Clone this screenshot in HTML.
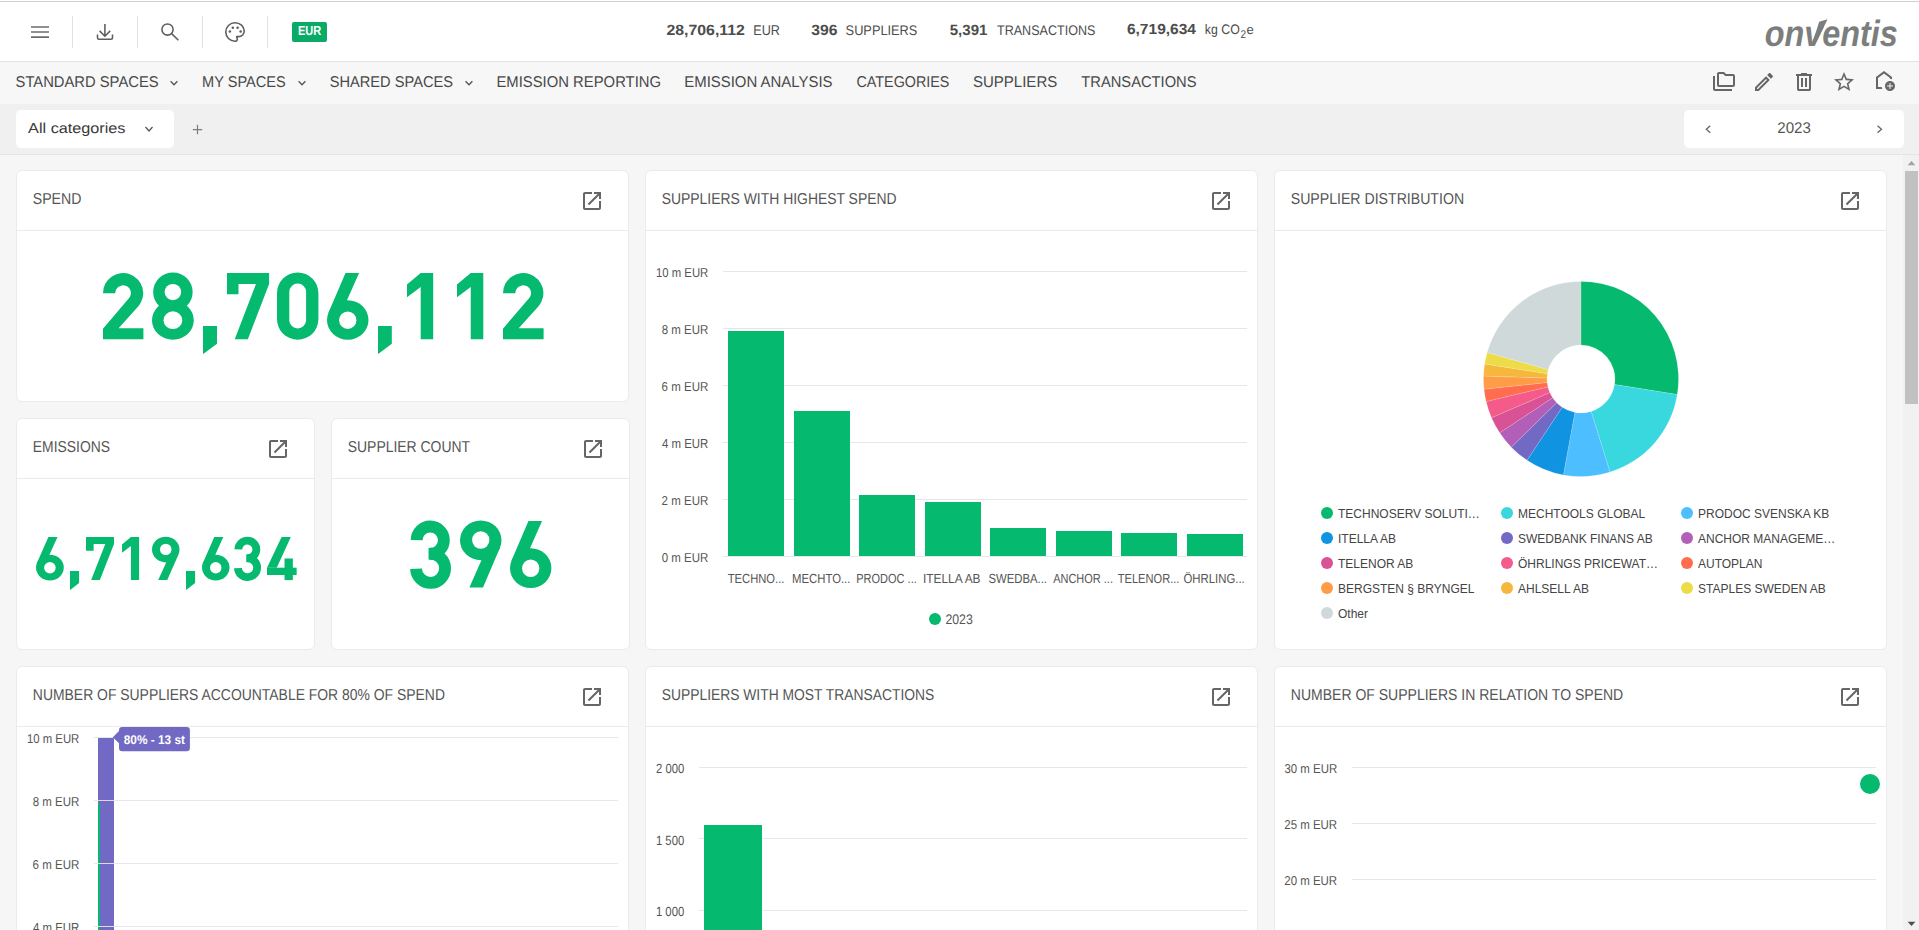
<!DOCTYPE html>
<html><head><meta charset="utf-8"><title>Spend dashboard</title>
<style>
html,body{margin:0;padding:0}
body{width:1919px;height:930px;overflow:hidden;position:relative;background:#f6f6f6;font-family:"Liberation Sans",sans-serif}
.t{position:absolute;white-space:nowrap;line-height:1;transform-origin:0 0;display:block;text-rendering:geometricPrecision}
</style></head><body>
<div style="position:absolute;left:0px;top:0px;width:1919px;height:61px;background:#fff;"></div>
<div style="position:absolute;left:0px;top:1px;width:1919px;height:1px;background:#cfd1d0;"></div>
<div style="position:absolute;left:0px;top:61px;width:1919px;height:1px;background:#e3e3e3;"></div>
<div style="position:absolute;left:72px;top:16px;width:1px;height:32px;background:#e2e2e2;"></div>
<div style="position:absolute;left:137px;top:16px;width:1px;height:32px;background:#e2e2e2;"></div>
<div style="position:absolute;left:202px;top:16px;width:1px;height:32px;background:#e2e2e2;"></div>
<div style="position:absolute;left:267px;top:16px;width:1px;height:32px;background:#e2e2e2;"></div>
<svg style="position:absolute;left:28px;top:20px" width="24" height="24" viewBox="28 20 24 24" fill="none" stroke="#5e5e5e" stroke-width="1.550" stroke-linecap="butt" stroke-linejoin="round"><path d="M31 27H49M31 32H49M31 37.100H49" stroke="#6c6c6c"/></svg>
<svg style="position:absolute;left:93px;top:20px" width="24" height="24" viewBox="93 20 24 24" fill="none" stroke="#5e5e5e" stroke-width="1.550" stroke-linecap="butt" stroke-linejoin="round"><path d="M104.900 23.900V35.600M99.600 30.900L104.900 36.200L110.200 30.900"/><path d="M97.500 34.500V37.800Q97.500 39.300 99 39.300H111Q112.500 39.300 112.500 37.800V34.500"/></svg>
<svg style="position:absolute;left:158px;top:20px" width="24" height="24" viewBox="158 20 24 24" fill="none" stroke="#5e5e5e" stroke-width="1.550" stroke-linecap="butt" stroke-linejoin="round"><circle cx="167.500" cy="29.500" r="5.600"/><path d="M171.600 33.600L178.400 40.200"/></svg>
<svg style="position:absolute;left:223px;top:20px" width="24" height="24" viewBox="223 20 24 24" fill="none" stroke="#5e5e5e" stroke-width="1.550" stroke-linecap="butt" stroke-linejoin="round"><g transform="translate(235 32) scale(0.925) translate(-12 -12)"><path d="M12 22C6.490 22 2 17.510 2 12S6.490 2 12 2s10 4.040 10 9c0 3.310-2.690 6-6 6h-1.770c-.28 0-.5.220-.5.500 0 .120.050.230.130.330.410.470.640 1.060.640 1.670A2.500 2.500 0 0 1 12 22z" stroke-width="1.680"/></g><circle cx="229.9" cy="31.6" r="1.250" fill="#5e5e5e" stroke="none"/><circle cx="232.8" cy="27.7" r="1.250" fill="#5e5e5e" stroke="none"/><circle cx="237.6" cy="27.7" r="1.250" fill="#5e5e5e" stroke="none"/><circle cx="240.6" cy="31.6" r="1.250" fill="#5e5e5e" stroke="none"/></svg>
<div style="position:absolute;left:292px;top:22px;width:35px;height:20px;background:#0aab66;border-radius:2px;"></div>
<span class="t" style="left:297px;top:24.22px;font-size:13.09px;color:#fff;transform:translateX(0.90px) scaleX(0.8442);font-weight:bold;">EUR</span>
<span class="t" style="left:666px;top:23.50px;font-size:14.77px;color:#4d4d4d;transform:translateX(0.45px) scaleX(1.0732);font-weight:bold;">28,706,112</span>
<span class="t" style="left:753px;top:23.06px;font-size:14.11px;color:#4d4d4d;transform:translateX(0.26px) scaleX(0.8939);">EUR</span>
<span class="t" style="left:811px;top:23.50px;font-size:14.77px;color:#4d4d4d;transform:translateX(0.20px) scaleX(1.0622);font-weight:bold;">396</span>
<span class="t" style="left:845px;top:24.23px;font-size:13.91px;color:#4d4d4d;transform:translateX(0.62px) scaleX(0.9189);">SUPPLIERS</span>
<span class="t" style="left:949px;top:23.50px;font-size:14.77px;color:#4d4d4d;transform:translateX(0.75px) scaleX(1.0193);font-weight:bold;">5,391</span>
<span class="t" style="left:997px;top:24.23px;font-size:13.91px;color:#4d4d4d;transform:translateX(0.02px) scaleX(0.9026);">TRANSACTIONS</span>
<span class="t" style="left:1126px;top:22.52px;font-size:14.62px;color:#4d4d4d;transform:translateX(0.92px) scaleX(1.0626);font-weight:bold;">6,719,634</span>
<span class="t" style="left:1204px;top:23.22px;font-size:13.86px;color:#4d4d4d;transform:translateX(0.87px) scaleX(0.8893);">kg CO</span>
<span class="t" style="left:1240px;top:30.43px;font-size:11.18px;color:#4d4d4d;transform:translateX(0.50px) scaleX(0.8948);">2</span>
<span class="t" style="left:1246px;top:22.82px;font-size:13.21px;color:#4d4d4d;transform:translateX(0.59px) scaleX(0.9912);">e</span>
<span class="t" style="left:1764px;top:15.83px;font-size:36.70px;color:#7c7e7d;transform:translateX(0.73px) scaleX(0.8826);font-weight:bold;font-style:italic;">onventis</span>
<svg style="position:absolute;left:1790px;top:10px" width="60" height="40" viewBox="0 0 60 40"><polygon points="24.800,35.700 37.500,9.250 29.200,11.750 21.500,35.700" fill="#7c7e7d"/></svg>
<div style="position:absolute;left:0px;top:62px;width:1919px;height:42px;background:#f7f7f7;"></div>
<span class="t" style="left:15px;top:74.87px;font-size:15.63px;color:#484848;transform:translateX(0.54px) scaleX(0.9451);">STANDARD SPACES</span>
<span class="t" style="left:202px;top:74.87px;font-size:15.63px;color:#484848;transform:translateX(0.10px) scaleX(0.9311);">MY SPACES</span>
<span class="t" style="left:329px;top:74.87px;font-size:15.63px;color:#484848;transform:translateX(0.69px) scaleX(0.9361);">SHARED SPACES</span>
<span class="t" style="left:496px;top:74.87px;font-size:15.63px;color:#484848;transform:translateX(0.43px) scaleX(0.9496);">EMISSION REPORTING</span>
<span class="t" style="left:684px;top:74.87px;font-size:15.63px;color:#484848;transform:translateX(0.27px) scaleX(0.9554);">EMISSION ANALYSIS</span>
<span class="t" style="left:856px;top:74.87px;font-size:15.63px;color:#484848;transform:translateX(0.48px) scaleX(0.9177);">CATEGORIES</span>
<span class="t" style="left:972px;top:74.87px;font-size:15.63px;color:#484848;transform:translateX(0.97px) scaleX(0.9607);">SUPPLIERS</span>
<span class="t" style="left:1081px;top:74.87px;font-size:15.63px;color:#484848;transform:translateX(0.37px) scaleX(0.9404);">TRANSACTIONS</span>
<svg style="position:absolute;left:166.4px;top:74.6px" width="16" height="16" viewBox="-8 -8 16 16"><polyline points="-3.4,-1.75 0,1.75 3.4,-1.75" fill="none" stroke="#555" stroke-width="1.3"/></svg>
<svg style="position:absolute;left:293.9px;top:74.6px" width="16" height="16" viewBox="-8 -8 16 16"><polyline points="-3.4,-1.75 0,1.75 3.4,-1.75" fill="none" stroke="#555" stroke-width="1.3"/></svg>
<svg style="position:absolute;left:461.2px;top:74.6px" width="16" height="16" viewBox="-8 -8 16 16"><polyline points="-3.4,-1.75 0,1.75 3.4,-1.75" fill="none" stroke="#555" stroke-width="1.3"/></svg>
<svg style="position:absolute;left:1712px;top:70px" width="24" height="24" viewBox="0 0 24 24"><path fill="#666" d="M3 19h17v2H3c-1.1 0-2-.9-2-2V6h2v13zM23 6v9c0 1.1-.9 2-2 2H7c-1.1 0-2-.9-2-2l.01-11c0-1.1.89-2 1.99-2h5l2 2h7c1.1 0 2 .9 2 2zM7 15h14V6h-7.830l-2-2H7v11z"/></svg>
<svg style="position:absolute;left:1752px;top:70px" width="24" height="24" viewBox="0 0 24 24"><path fill="#666" d="M14.06 9.02l.92.92L5.92 19H5v-.92l9.06-9.06M17.66 3c-.25 0-.51.1-.7.29l-1.83 1.83 3.75 3.75 1.83-1.83c.39-.39.39-1.02 0-1.41l-2.34-2.34c-.2-.2-.45-.29-.71-.29zm-3.6 3.19L3 17.250V21h3.750L17.810 9.940l-3.750-3.750z"/></svg>
<svg style="position:absolute;left:1792px;top:70px" width="24" height="24" viewBox="0 0 24 24"><path fill="#666" d="M7 21q-.825 0-1.412-.587T5 19V6H4V4h5V3h6v1h5v2h-1v13q0 .825-.587 1.413T17 21zM17 6H7v13h10zM9 17h2V8H9zm4 0h2V8h-2zM7 6v13z"/></svg>
<svg style="position:absolute;left:1832px;top:70px" width="24" height="24" viewBox="0 0 24 24"><path fill="#666" d="M22 9.240l-7.190-.620L12 2 9.190 8.630 2 9.240l5.460 4.730L5.820 21 12 17.270 18.180 21l-1.630-7.030L22 9.240zM12 15.400l-3.760 2.270 1-4.280-3.320-2.880 4.380-.380L12 6.100l1.710 4.040 4.380.380-3.320 2.880 1 4.280L12 15.400z"/></svg>
<svg style="position:absolute;left:1872px;top:68px" width="24" height="24" viewBox="0 0 24 24"><path fill="#666" d="M6 19h3.690c.1.710.310 1.380.610 2H4V9l8-6 8 6v2.290c-.630-.190-1.300-.290-2-.290v-1l-6-4.500L6 10v9z M18 13c-2.760 0-5 2.240-5 5s2.240 5 5 5 5-2.240 5-5-2.240-5-5-5zm3 5.500h-2.500V21h-1v-2.500H15v-1h2.500V15h1v2.500H21v1z"/></svg>
<div style="position:absolute;left:0px;top:104px;width:1919px;height:50px;background:#f0f0f0;"></div>
<div style="position:absolute;left:0px;top:154px;width:1919px;height:1px;background:#e4e4e4;"></div>
<div style="position:absolute;left:16px;top:110px;width:158px;height:38px;background:#fff;border-radius:5px;"></div>
<span class="t" style="left:28px;top:121.74px;font-size:14.48px;color:#3a3a3a;transform:translateX(0.11px) scaleX(1.1211);">All categories</span>
<svg style="position:absolute;left:141.4px;top:121.0px" width="16" height="16" viewBox="-8 -8 16 16"><polyline points="-3.5,-1.95 0,1.95 3.5,-1.95" fill="none" stroke="#555" stroke-width="1.3"/></svg>
<svg style="position:absolute;left:192px;top:124px" width="11" height="11" viewBox="0 0 11 11"><path d="M5.5 0.8v9.4M0.8 5.500h9.400" stroke="#7d7d7d" stroke-width="1.250" fill="none"/></svg>
<div style="position:absolute;left:1684px;top:110px;width:220px;height:38px;background:#fff;border-radius:5px;"></div>
<span class="t" style="left:1777px;top:121.09px;font-size:15.48px;color:#555;transform:translateX(0.24px) scaleX(0.9764);">2023</span>
<svg style="position:absolute;left:1700px;top:121px" width="16" height="16" viewBox="0 0 16 16"><polyline points="10.300,4.700 6.300,8.200 10.300,11.700" fill="none" stroke="#666" stroke-width="1.300"/></svg>
<svg style="position:absolute;left:1872px;top:121px" width="16" height="16" viewBox="0 0 16 16"><polyline points="5.500,4.700 9.500,8.200 5.500,11.700" fill="none" stroke="#666" stroke-width="1.300"/></svg>
<div style="position:absolute;left:1903px;top:155px;width:16px;height:775px;background:#f1f1f1;"></div>
<div style="position:absolute;left:1905px;top:171px;width:13px;height:233px;background:#c1c1c1;"></div>
<svg style="position:absolute;left:1903px;top:155px" width="16" height="16" viewBox="0 0 16 16"><polygon points="4.600,10.200 8.500,5.900 12.400,10.200" fill="#a3a3a3"/></svg>
<svg style="position:absolute;left:1903px;top:914px" width="16" height="16" viewBox="0 0 16 16"><polygon points="4.600,7.700 8.500,12 12.400,7.700" fill="#505050"/></svg>
<div style="position:absolute;left:16px;top:170px;width:611px;height:230px;background:#fff;border:1px solid #ebebeb;border-radius:6px;"></div>
<div style="position:absolute;left:17px;top:230px;width:611px;height:1px;background:#ebebeb;"></div>
<span class="t" style="left:32px;top:191.65px;font-size:15.77px;color:#555;transform:translateX(0.71px) scaleX(0.8956);">SPEND</span>
<svg style="position:absolute;left:580px;top:189px" width="24" height="24" viewBox="0 0 24 24"><path fill="#666" d="M19 19H5V5h7V3H5c-1.110 0-2 .9-2 2v14c0 1.100.890 2 2 2h14c1.100 0 2-.9 2-2v-7h-2v7zM14 3v2h3.590l-9.830 9.830 1.410 1.410L19 6.410V10h2V3h-7z"/></svg>
<div style="position:absolute;left:16px;top:418px;width:297px;height:230px;background:#fff;border:1px solid #ebebeb;border-radius:6px;"></div>
<div style="position:absolute;left:17px;top:478px;width:297px;height:1px;background:#ebebeb;"></div>
<span class="t" style="left:32px;top:439.65px;font-size:15.77px;color:#555;transform:translateX(0.85px) scaleX(0.8811);">EMISSIONS</span>
<svg style="position:absolute;left:266px;top:437px" width="24" height="24" viewBox="0 0 24 24"><path fill="#666" d="M19 19H5V5h7V3H5c-1.110 0-2 .9-2 2v14c0 1.100.890 2 2 2h14c1.100 0 2-.9 2-2v-7h-2v7zM14 3v2h3.590l-9.830 9.830 1.410 1.410L19 6.410V10h2V3h-7z"/></svg>
<div style="position:absolute;left:331px;top:418px;width:297px;height:230px;background:#fff;border:1px solid #ebebeb;border-radius:6px;"></div>
<div style="position:absolute;left:332px;top:478px;width:297px;height:1px;background:#ebebeb;"></div>
<span class="t" style="left:347px;top:439.65px;font-size:15.77px;color:#555;transform:translateX(0.72px) scaleX(0.8842);">SUPPLIER COUNT</span>
<svg style="position:absolute;left:581px;top:437px" width="24" height="24" viewBox="0 0 24 24"><path fill="#666" d="M19 19H5V5h7V3H5c-1.110 0-2 .9-2 2v14c0 1.100.890 2 2 2h14c1.100 0 2-.9 2-2v-7h-2v7zM14 3v2h3.590l-9.830 9.830 1.410 1.410L19 6.410V10h2V3h-7z"/></svg>
<div style="position:absolute;left:645px;top:170px;width:611px;height:478px;background:#fff;border:1px solid #ebebeb;border-radius:6px;"></div>
<div style="position:absolute;left:646px;top:230px;width:611px;height:1px;background:#ebebeb;"></div>
<span class="t" style="left:661px;top:191.65px;font-size:15.77px;color:#555;transform:translateX(0.72px) scaleX(0.8828);">SUPPLIERS WITH HIGHEST SPEND</span>
<svg style="position:absolute;left:1209px;top:189px" width="24" height="24" viewBox="0 0 24 24"><path fill="#666" d="M19 19H5V5h7V3H5c-1.110 0-2 .9-2 2v14c0 1.100.890 2 2 2h14c1.100 0 2-.9 2-2v-7h-2v7zM14 3v2h3.590l-9.830 9.830 1.410 1.410L19 6.410V10h2V3h-7z"/></svg>
<div style="position:absolute;left:1274px;top:170px;width:611px;height:478px;background:#fff;border:1px solid #ebebeb;border-radius:6px;"></div>
<div style="position:absolute;left:1275px;top:230px;width:611px;height:1px;background:#ebebeb;"></div>
<span class="t" style="left:1290px;top:191.65px;font-size:15.77px;color:#555;transform:translateX(0.71px) scaleX(0.8956);">SUPPLIER DISTRIBUTION</span>
<svg style="position:absolute;left:1838px;top:189px" width="24" height="24" viewBox="0 0 24 24"><path fill="#666" d="M19 19H5V5h7V3H5c-1.110 0-2 .9-2 2v14c0 1.100.890 2 2 2h14c1.100 0 2-.9 2-2v-7h-2v7zM14 3v2h3.590l-9.830 9.830 1.410 1.410L19 6.410V10h2V3h-7z"/></svg>
<div style="position:absolute;left:16px;top:666px;width:611px;height:288px;background:#fff;border:1px solid #ebebeb;border-radius:6px;"></div>
<div style="position:absolute;left:17px;top:726px;width:611px;height:1px;background:#ebebeb;"></div>
<span class="t" style="left:32px;top:687.65px;font-size:15.77px;color:#555;transform:translateX(0.85px) scaleX(0.8831);">NUMBER OF SUPPLIERS ACCOUNTABLE FOR 80% OF SPEND</span>
<svg style="position:absolute;left:580px;top:685px" width="24" height="24" viewBox="0 0 24 24"><path fill="#666" d="M19 19H5V5h7V3H5c-1.110 0-2 .9-2 2v14c0 1.100.890 2 2 2h14c1.100 0 2-.9 2-2v-7h-2v7zM14 3v2h3.590l-9.830 9.830 1.410 1.410L19 6.410V10h2V3h-7z"/></svg>
<div style="position:absolute;left:645px;top:666px;width:611px;height:288px;background:#fff;border:1px solid #ebebeb;border-radius:6px;"></div>
<div style="position:absolute;left:646px;top:726px;width:611px;height:1px;background:#ebebeb;"></div>
<span class="t" style="left:661px;top:687.65px;font-size:15.77px;color:#555;transform:translateX(0.73px) scaleX(0.8782);">SUPPLIERS WITH MOST TRANSACTIONS</span>
<svg style="position:absolute;left:1209px;top:685px" width="24" height="24" viewBox="0 0 24 24"><path fill="#666" d="M19 19H5V5h7V3H5c-1.110 0-2 .9-2 2v14c0 1.100.890 2 2 2h14c1.100 0 2-.9 2-2v-7h-2v7zM14 3v2h3.590l-9.830 9.830 1.410 1.410L19 6.410V10h2V3h-7z"/></svg>
<div style="position:absolute;left:1274px;top:666px;width:611px;height:288px;background:#fff;border:1px solid #ebebeb;border-radius:6px;"></div>
<div style="position:absolute;left:1275px;top:726px;width:611px;height:1px;background:#ebebeb;"></div>
<span class="t" style="left:1290px;top:687.65px;font-size:15.77px;color:#555;transform:translateX(0.84px) scaleX(0.8885);">NUMBER OF SUPPLIERS IN RELATION TO SPEND</span>
<svg style="position:absolute;left:1838px;top:685px" width="24" height="24" viewBox="0 0 24 24"><path fill="#666" d="M19 19H5V5h7V3H5c-1.110 0-2 .9-2 2v14c0 1.100.890 2 2 2h14c1.100 0 2-.9 2-2v-7h-2v7zM14 3v2h3.590l-9.830 9.830 1.410 1.410L19 6.410V10h2V3h-7z"/></svg>
<svg style="position:absolute;left:100.10px;top:269.90px;overflow:visible" width="46.40" height="72.20"><g transform="translate(3,3) scale(1.0000,1.0015)"><path d="M0,20.1 A20.1,20.1 0 1 1 35.59,32.91 L15.600,55.25 H40.4 V66.1 H0 V55.6 L26.11,25.07 A7.8,7.8 0 1 0 12.3,20.1 Z" fill="#05b96f"/></g></svg>
<svg style="position:absolute;left:148.90px;top:269.90px;overflow:visible" width="47.80" height="72.20"><g transform="translate(3,3) scale(0.9976,1.0015)"><ellipse cx="20.95" cy="19.0" rx="19.8" ry="19.5" fill="#05b96f"/><ellipse cx="20.95" cy="47.2" rx="20.95" ry="19.4" fill="#05b96f"/><ellipse cx="20.95" cy="19.0" rx="8.3" ry="8.1" fill="#fff"/><ellipse cx="20.95" cy="47.1" rx="9.4" ry="8.8" fill="#fff"/></g></svg>
<svg style="position:absolute;left:201.10px;top:323.90px" width="18.00" height="31.80" viewBox="201.10 323.90 18.00 31.80"><polygon points="203.1,325.9 217.1,325.9 217.1,343.69 203.6,353.7 203.1,353.7" fill="#05b96f"/></svg>
<svg style="position:absolute;left:225.30px;top:270.90px" width="46.10" height="70.20" viewBox="225.30 270.90 46.10 70.20"><polygon points="227.30,272.90 269.40,272.90 269.40,283.79 248.16,339.10 235.05,339.10 256.28,283.79 238.79,283.79 238.79,294.05 227.30,294.05" fill="#05b96f"/></svg>
<svg style="position:absolute;left:274.10px;top:269.90px;overflow:visible" width="47.40" height="72.20"><g transform="translate(3,3) scale(1.0000,1.0015)"><rect x="0" y="-0.5" width="41.4" height="67.1" rx="20.7" ry="20.7" fill="#05b96f"/><rect x="12.3" y="10.6" width="16.8" height="44.9" rx="8.4" ry="8.4" fill="#fff"/></g></svg>
<svg style="position:absolute;left:323.90px;top:269.90px;overflow:visible" width="47.50" height="72.20"><g transform="translate(3,3) scale(1.0000,1.0015)"><polygon points="18.5,0 32.1,0 19.2,29.0 20,47 1.55,39.42" fill="#05b96f"/><ellipse cx="20.75" cy="46.9" rx="20.75" ry="19.75" fill="#05b96f"/><ellipse cx="20.75" cy="47.1" rx="8.65" ry="8.75" fill="#fff"/></g></svg>
<svg style="position:absolute;left:376.10px;top:323.90px" width="17.80" height="31.80" viewBox="376.10 323.90 17.80 31.80"><polygon points="378.1,325.9 391.9,325.9 391.9,343.69 378.6,353.7 378.1,353.7" fill="#05b96f"/></svg>
<svg style="position:absolute;left:404.90px;top:270.90px" width="30.20" height="70.20" viewBox="404.90 270.90 30.20 70.20"><polygon points="420.60,272.90 433.10,272.90 433.10,339.10 420.60,339.10 420.60,286.90 406.90,297.26 406.90,284.40" fill="#05b96f"/></svg>
<svg style="position:absolute;left:454.60px;top:270.90px" width="30.30" height="70.20" viewBox="454.60 270.90 30.30 70.20"><polygon points="470.35,272.90 482.90,272.90 482.90,339.10 470.35,339.10 470.35,286.90 456.60,297.26 456.60,284.40" fill="#05b96f"/></svg>
<svg style="position:absolute;left:499.50px;top:269.90px;overflow:visible" width="46.60" height="72.20"><g transform="translate(3,3) scale(1.0050,1.0015)"><path d="M0,20.1 A20.1,20.1 0 1 1 35.59,32.91 L15.600,55.25 H40.4 V66.1 H0 V55.6 L26.11,25.07 A7.8,7.8 0 1 0 12.3,20.1 Z" fill="#05b96f"/></g></svg>
<svg style="position:absolute;left:32.90px;top:533.80px;overflow:visible" width="33.80" height="49.10"><g transform="translate(3,3) scale(0.6699,0.6520)"><polygon points="18.5,0 32.1,0 19.2,29.0 20,47 1.55,39.42" fill="#05b96f"/><ellipse cx="20.75" cy="46.9" rx="20.75" ry="19.75" fill="#05b96f"/><ellipse cx="20.75" cy="47.1" rx="8.65" ry="8.75" fill="#fff"/></g></svg>
<svg style="position:absolute;left:68.20px;top:569.00px" width="13.10" height="22.70" viewBox="68.20 569.00 13.10 22.70"><polygon points="70.2,571 79.3,571 79.3,582.97 70.7,589.7 70.2,589.7" fill="#05b96f"/></svg>
<svg style="position:absolute;left:84.00px;top:534.80px" width="32.00" height="47.10" viewBox="84.00 534.80 32.00 47.10"><polygon points="86.00,536.80 114.00,536.80 114.00,543.89 99.87,579.90 91.15,579.90 105.28,543.89 93.64,543.89 93.64,550.57 86.00,550.57" fill="#05b96f"/></svg>
<svg style="position:absolute;left:120.00px;top:534.80px" width="21.10" height="47.10" viewBox="120.00 534.80 21.10 47.10"><polygon points="130.94,536.80 139.10,536.80 139.10,579.90 130.94,579.90 130.94,545.92 122.00,552.66 122.00,544.29" fill="#05b96f"/></svg>
<svg style="position:absolute;left:148.90px;top:533.80px;overflow:visible" width="33.50" height="49.10"><g transform="translate(3,3) scale(0.6627,0.6520)"><g transform="rotate(180 20.75 33.05)"><polygon points="18.5,0 32.1,0 19.2,29.0 20,47 1.55,39.42" fill="#05b96f"/><ellipse cx="20.75" cy="46.9" rx="20.75" ry="19.75" fill="#05b96f"/><ellipse cx="20.75" cy="47.1" rx="8.65" ry="8.75" fill="#fff"/></g></g></svg>
<svg style="position:absolute;left:183.90px;top:569.00px" width="13.10" height="22.70" viewBox="183.90 569.00 13.10 22.70"><polygon points="185.9,571 195,571 195,582.97 186.4,589.7 185.9,589.7" fill="#05b96f"/></svg>
<svg style="position:absolute;left:198.50px;top:533.80px;overflow:visible" width="33.50" height="49.10"><g transform="translate(3,3) scale(0.6627,0.6520)"><polygon points="18.5,0 32.1,0 19.2,29.0 20,47 1.55,39.42" fill="#05b96f"/><ellipse cx="20.75" cy="46.9" rx="20.75" ry="19.75" fill="#05b96f"/><ellipse cx="20.75" cy="47.1" rx="8.65" ry="8.75" fill="#fff"/></g></svg>
<svg style="position:absolute;left:230.90px;top:533.80px;overflow:visible" width="33.70" height="49.10"><g transform="translate(3,3) scale(0.6611,0.6520)"><path d="M6.6,19.0 A13.6,13.6 0 1 1 20.2,32.7" fill="none" stroke="#05b96f" stroke-width="11.8"/><path d="M20.2,32.6 A14.5,14.5 0 1 1 6.0,47.6" fill="none" stroke="#05b96f" stroke-width="11.8"/><polygon points="18.5,26.8 24,26.8 24,38.5 18.5,38.5" fill="#05b96f"/></g></svg>
<svg style="position:absolute;left:263.50px;top:533.80px;overflow:visible" width="35.60" height="49.10"><g transform="translate(3,3) scale(0.6520,0.6520)"><polygon points="22.401866438106627,0.0 36.5150422941138,0.0 15.009250513531441,47.04391952002391 0.0,47.04391952002391" fill="#05b96f"/><polygon points="0.0,47.04391952002391 45.47578886935645,47.04391952002391 45.47578886935645,58.24485273907723 0.0,58.24485273907723" fill="#05b96f"/><polygon points="26.88223972572795,32.93074366401674 39.651303595448724,32.93074366401674 39.651303595448724,66.08550599241455 26.88223972572795,66.08550599241455" fill="#05b96f"/></g></svg>
<svg style="position:absolute;left:406.50px;top:517.90px;overflow:visible" width="48.00" height="72.40"><g transform="translate(3,3) scale(1.0024,1.0045)"><path d="M6.6,19.0 A13.6,13.6 0 1 1 20.2,32.7" fill="none" stroke="#05b96f" stroke-width="11.8"/><path d="M20.2,32.6 A14.5,14.5 0 1 1 6.0,47.6" fill="none" stroke="#05b96f" stroke-width="11.8"/><polygon points="18.5,26.8 24,26.8 24,38.5 18.5,38.5" fill="#05b96f"/></g></svg>
<svg style="position:absolute;left:457.00px;top:517.90px;overflow:visible" width="47.50" height="72.40"><g transform="translate(3,3) scale(1.0000,1.0045)"><g transform="rotate(180 20.75 33.05)"><polygon points="18.5,0 32.1,0 19.2,29.0 20,47 1.55,39.42" fill="#05b96f"/><ellipse cx="20.75" cy="46.9" rx="20.75" ry="19.75" fill="#05b96f"/><ellipse cx="20.75" cy="47.1" rx="8.65" ry="8.75" fill="#fff"/></g></g></svg>
<svg style="position:absolute;left:506.50px;top:517.90px;overflow:visible" width="47.40" height="72.40"><g transform="translate(3,3) scale(0.9976,1.0045)"><polygon points="18.5,0 32.1,0 19.2,29.0 20,47 1.55,39.42" fill="#05b96f"/><ellipse cx="20.75" cy="46.9" rx="20.75" ry="19.75" fill="#05b96f"/><ellipse cx="20.75" cy="47.1" rx="8.65" ry="8.75" fill="#fff"/></g></svg>
<div style="position:absolute;left:723px;top:271px;width:524px;height:1px;background:#e6e6e6;"></div>
<span class="t" style="left:655px;top:267.38px;font-size:12.90px;color:#555;transform:translateX(0.95px) scaleX(0.8803);">10 m EUR</span>
<div style="position:absolute;left:723px;top:328px;width:524px;height:1px;background:#e6e6e6;"></div>
<span class="t" style="left:661px;top:324.38px;font-size:12.90px;color:#555;transform:translateX(0.71px) scaleX(0.8908);">8 m EUR</span>
<div style="position:absolute;left:723px;top:385px;width:524px;height:1px;background:#e6e6e6;"></div>
<span class="t" style="left:661px;top:381.38px;font-size:12.90px;color:#555;transform:translateX(0.62px) scaleX(0.8924);">6 m EUR</span>
<div style="position:absolute;left:723px;top:442px;width:524px;height:1px;background:#e6e6e6;"></div>
<span class="t" style="left:661px;top:437.22px;font-size:13.09px;color:#555;transform:translateX(0.94px) scaleX(0.8736);">4 m EUR</span>
<div style="position:absolute;left:723px;top:499px;width:524px;height:1px;background:#e6e6e6;"></div>
<span class="t" style="left:661px;top:495.38px;font-size:12.90px;color:#555;transform:translateX(0.62px) scaleX(0.8924);">2 m EUR</span>
<div style="position:absolute;left:723px;top:556px;width:524px;height:1px;background:#e6e6e6;"></div>
<span class="t" style="left:661px;top:552.38px;font-size:12.90px;color:#555;transform:translateX(0.74px) scaleX(0.8902);">0 m EUR</span>
<div style="position:absolute;left:728px;top:331px;width:56px;height:225px;background:#05b96f;"></div>
<div style="position:absolute;left:794px;top:411px;width:56px;height:145px;background:#05b96f;"></div>
<div style="position:absolute;left:859px;top:495px;width:56px;height:61px;background:#05b96f;"></div>
<div style="position:absolute;left:925px;top:502px;width:56px;height:54px;background:#05b96f;"></div>
<div style="position:absolute;left:990px;top:527.7px;width:56px;height:28.299999999999955px;background:#05b96f;"></div>
<div style="position:absolute;left:1056px;top:530.7px;width:56px;height:25.299999999999955px;background:#05b96f;"></div>
<div style="position:absolute;left:1121px;top:532.7px;width:56px;height:23.299999999999955px;background:#05b96f;"></div>
<div style="position:absolute;left:1187px;top:534px;width:56px;height:22px;background:#05b96f;"></div>
<span class="t" style="left:727px;top:572.13px;font-size:13.20px;color:#555;transform:translateX(0.75px) scaleX(0.8499);">TECHNO...</span>
<span class="t" style="left:792px;top:572.13px;font-size:13.20px;color:#555;transform:translateX(0.06px) scaleX(0.8596);">MECHTO...</span>
<span class="t" style="left:856px;top:572.13px;font-size:13.20px;color:#555;transform:translateX(0.29px) scaleX(0.8333);">PRODOC ...</span>
<span class="t" style="left:922px;top:572.13px;font-size:13.20px;color:#555;transform:translateX(0.90px) scaleX(0.9041);">ITELLA AB</span>
<span class="t" style="left:988px;top:572.13px;font-size:13.20px;color:#555;transform:translateX(0.49px) scaleX(0.8581);">SWEDBA...</span>
<span class="t" style="left:1053px;top:572.13px;font-size:13.20px;color:#555;transform:translateX(0.17px) scaleX(0.8322);">ANCHOR ...</span>
<span class="t" style="left:1117px;top:572.13px;font-size:13.20px;color:#555;transform:translateX(0.75px) scaleX(0.8411);">TELENOR...</span>
<span class="t" style="left:1183px;top:572.13px;font-size:13.20px;color:#555;transform:translateX(0.46px) scaleX(0.8625);">ÖHRLING...</span>
<div style="position:absolute;left:928.8px;top:612.9px;width:12px;height:12px;border-radius:50%;background:#05b96f"></div>
<span class="t" style="left:945px;top:613.43px;font-size:13.91px;color:#555;transform:translateX(0.38px) scaleX(0.8845);">2023</span>
<svg style="position:absolute;left:1470.6px;top:268.5px" width="220" height="220" viewBox="-110 -110 220 220"><path d="M0.00 -97.50A97.5 97.5 0 0 1 96.25 15.59L33.56 5.44A34.0 34.0 0 0 0 0.00 -34.00Z" fill="#05b96f" stroke="#fff" stroke-opacity="0.4" stroke-width="0.35"/><path d="M96.25 15.59A97.5 97.5 0 0 1 28.99 93.09L10.11 32.46A34.0 34.0 0 0 0 33.56 5.44Z" fill="#38d8de" stroke="#fff" stroke-opacity="0.4" stroke-width="0.35"/><path d="M28.99 93.09A97.5 97.5 0 0 1 -17.60 95.90L-6.14 33.44A34.0 34.0 0 0 0 10.11 32.46Z" fill="#4dbeff" stroke="#fff" stroke-opacity="0.4" stroke-width="0.35"/><path d="M-17.60 95.90A97.5 97.5 0 0 1 -53.96 81.21L-18.82 28.32A34.0 34.0 0 0 0 -6.14 33.44Z" fill="#1093e0" stroke="#fff" stroke-opacity="0.4" stroke-width="0.35"/><path d="M-53.96 81.21A97.5 97.5 0 0 1 -69.72 68.16L-24.31 23.77A34.0 34.0 0 0 0 -18.82 28.32Z" fill="#7269c4" stroke="#fff" stroke-opacity="0.4" stroke-width="0.35"/><path d="M-69.72 68.16A97.5 97.5 0 0 1 -81.30 53.81L-28.35 18.77A34.0 34.0 0 0 0 -24.31 23.77Z" fill="#b25fb9" stroke="#fff" stroke-opacity="0.4" stroke-width="0.35"/><path d="M-81.30 53.81A97.5 97.5 0 0 1 -89.48 38.72L-31.20 13.50A34.0 34.0 0 0 0 -28.35 18.77Z" fill="#da5296" stroke="#fff" stroke-opacity="0.4" stroke-width="0.35"/><path d="M-89.48 38.72A97.5 97.5 0 0 1 -94.85 22.60L-33.07 7.88A34.0 34.0 0 0 0 -31.20 13.50Z" fill="#f45b8a" stroke="#fff" stroke-opacity="0.4" stroke-width="0.35"/><path d="M-94.85 22.60A97.5 97.5 0 0 1 -96.97 10.19L-33.81 3.55A34.0 34.0 0 0 0 -33.07 7.88Z" fill="#ff6d4e" stroke="#fff" stroke-opacity="0.4" stroke-width="0.35"/><path d="M-96.97 10.19A97.5 97.5 0 0 1 -97.46 -2.89L-33.99 -1.01A34.0 34.0 0 0 0 -33.81 3.55Z" fill="#ff9c47" stroke="#fff" stroke-opacity="0.4" stroke-width="0.35"/><path d="M-97.46 -2.89A97.5 97.5 0 0 1 -96.33 -15.08L-33.59 -5.26A34.0 34.0 0 0 0 -33.99 -1.01Z" fill="#f6b83c" stroke="#fff" stroke-opacity="0.4" stroke-width="0.35"/><path d="M-96.33 -15.08A97.5 97.5 0 0 1 -93.82 -26.55L-32.72 -9.26A34.0 34.0 0 0 0 -33.59 -5.26Z" fill="#eddc47" stroke="#fff" stroke-opacity="0.4" stroke-width="0.35"/><path d="M-93.82 -26.55A97.5 97.5 0 0 1 -0.00 -97.50L-0.00 -34.00A34.0 34.0 0 0 0 -32.72 -9.26Z" fill="#d0d9da" stroke="#fff" stroke-opacity="0.4" stroke-width="0.35"/></svg>
<div style="position:absolute;left:1321px;top:507.29999999999995px;width:12px;height:12px;border-radius:50%;background:#05b96f"></div>
<span class="t" style="left:1338px;top:506.79999999999995px;font-size:12px;line-height:15px;color:#444;text-rendering:auto">TECHNOSERV SOLUTI…</span>
<div style="position:absolute;left:1501px;top:507.29999999999995px;width:12px;height:12px;border-radius:50%;background:#38d8de"></div>
<span class="t" style="left:1518px;top:506.79999999999995px;font-size:12px;line-height:15px;color:#444;text-rendering:auto">MECHTOOLS GLOBAL</span>
<div style="position:absolute;left:1681px;top:507.29999999999995px;width:12px;height:12px;border-radius:50%;background:#4dbeff"></div>
<span class="t" style="left:1698px;top:506.79999999999995px;font-size:12px;line-height:15px;color:#444;text-rendering:auto">PRODOC SVENSKA KB</span>
<div style="position:absolute;left:1321px;top:532.3px;width:12px;height:12px;border-radius:50%;background:#1093e0"></div>
<span class="t" style="left:1338px;top:531.8px;font-size:12px;line-height:15px;color:#444;text-rendering:auto">ITELLA AB</span>
<div style="position:absolute;left:1501px;top:532.3px;width:12px;height:12px;border-radius:50%;background:#7269c4"></div>
<span class="t" style="left:1518px;top:531.8px;font-size:12px;line-height:15px;color:#444;text-rendering:auto">SWEDBANK FINANS AB</span>
<div style="position:absolute;left:1681px;top:532.3px;width:12px;height:12px;border-radius:50%;background:#b25fb9"></div>
<span class="t" style="left:1698px;top:531.8px;font-size:12px;line-height:15px;color:#444;text-rendering:auto">ANCHOR MANAGEME…</span>
<div style="position:absolute;left:1321px;top:557.3px;width:12px;height:12px;border-radius:50%;background:#da5296"></div>
<span class="t" style="left:1338px;top:556.8px;font-size:12px;line-height:15px;color:#444;text-rendering:auto">TELENOR AB</span>
<div style="position:absolute;left:1501px;top:557.3px;width:12px;height:12px;border-radius:50%;background:#f45b8a"></div>
<span class="t" style="left:1518px;top:556.8px;font-size:12px;line-height:15px;color:#444;text-rendering:auto">ÖHRLINGS PRICEWAT…</span>
<div style="position:absolute;left:1681px;top:557.3px;width:12px;height:12px;border-radius:50%;background:#ff6d4e"></div>
<span class="t" style="left:1698px;top:556.8px;font-size:12px;line-height:15px;color:#444;text-rendering:auto">AUTOPLAN</span>
<div style="position:absolute;left:1321px;top:582.3px;width:12px;height:12px;border-radius:50%;background:#ff9c47"></div>
<span class="t" style="left:1338px;top:581.8px;font-size:12px;line-height:15px;color:#444;text-rendering:auto">BERGSTEN § BRYNGEL</span>
<div style="position:absolute;left:1501px;top:582.3px;width:12px;height:12px;border-radius:50%;background:#f6b83c"></div>
<span class="t" style="left:1518px;top:581.8px;font-size:12px;line-height:15px;color:#444;text-rendering:auto">AHLSELL AB</span>
<div style="position:absolute;left:1681px;top:582.3px;width:12px;height:12px;border-radius:50%;background:#eddc47"></div>
<span class="t" style="left:1698px;top:581.8px;font-size:12px;line-height:15px;color:#444;text-rendering:auto">STAPLES SWEDEN AB</span>
<div style="position:absolute;left:1321px;top:607.3px;width:12px;height:12px;border-radius:50%;background:#d0d9da"></div>
<span class="t" style="left:1338px;top:606.8px;font-size:12px;line-height:15px;color:#444;text-rendering:auto">Other</span>
<div style="position:absolute;left:97.6px;top:738px;width:16.9px;height:200px;background:#7269c4;"></div>
<div style="position:absolute;left:98.2px;top:803px;width:2.1px;height:140px;background:#05b96f;"></div>
<div style="position:absolute;left:94px;top:737px;width:524px;height:1px;background:#e6e6e6;"></div>
<span class="t" style="left:26px;top:733.18px;font-size:12.90px;color:#555;transform:translateX(0.95px) scaleX(0.8803);">10 m EUR</span>
<div style="position:absolute;left:94px;top:800px;width:524px;height:1px;background:rgba(230,230,230,0.9);"></div>
<span class="t" style="left:32px;top:796.18px;font-size:12.90px;color:#555;transform:translateX(0.71px) scaleX(0.8908);">8 m EUR</span>
<div style="position:absolute;left:94px;top:863px;width:524px;height:1px;background:rgba(230,230,230,0.9);"></div>
<span class="t" style="left:32px;top:859.18px;font-size:12.90px;color:#555;transform:translateX(0.62px) scaleX(0.8924);">6 m EUR</span>
<div style="position:absolute;left:94px;top:926px;width:524px;height:1px;background:rgba(230,230,230,0.9);"></div>
<span class="t" style="left:32px;top:921.02px;font-size:13.09px;color:#555;transform:translateX(0.94px) scaleX(0.8736);">4 m EUR</span>
<div style="position:absolute;left:97.6px;top:738px;width:16.9px;height:1px;background:#7269c4;"></div>
<svg style="position:absolute;left:110px;top:725px" width="84" height="30" viewBox="110 725 84 30"><path d="M112.800 737.200L119 731V730.200q0-3.200 3.200-3.200H186.700q3.200 0 3.200 3.200V748q0 3.200-3.200 3.200H122.200q-3.200 0-3.200-3.200V743.300Z" fill="#7269c4"/></svg>
<span class="t" style="left:123px;top:734.12px;font-size:12.62px;color:#fff;transform:translateX(0.76px) scaleX(0.9403);font-weight:bold;">80% - 13 st</span>
<div style="position:absolute;left:699px;top:767px;width:548px;height:1px;background:#e6e6e6;"></div>
<span class="t" style="left:655px;top:762.01px;font-size:13.33px;color:#555;transform:translateX(0.99px) scaleX(0.8463);">2 000</span>
<div style="position:absolute;left:699px;top:838px;width:548px;height:1px;background:#e6e6e6;"></div>
<span class="t" style="left:655px;top:833.51px;font-size:13.33px;color:#555;transform:translateX(0.95px) scaleX(0.8474);">1 500</span>
<div style="position:absolute;left:699px;top:910px;width:548px;height:1px;background:#e6e6e6;"></div>
<span class="t" style="left:655px;top:905.01px;font-size:13.33px;color:#555;transform:translateX(0.95px) scaleX(0.8474);">1 000</span>
<div style="position:absolute;left:704px;top:825px;width:58px;height:120px;background:#05b96f;"></div>
<div style="position:absolute;left:1352px;top:767px;width:524px;height:1px;background:#e6e6e6;"></div>
<span class="t" style="left:1284px;top:763.38px;font-size:12.90px;color:#555;transform:translateX(0.42px) scaleX(0.8867);">30 m EUR</span>
<div style="position:absolute;left:1352px;top:823px;width:524px;height:1px;background:#e6e6e6;"></div>
<span class="t" style="left:1284px;top:819.38px;font-size:12.90px;color:#555;transform:translateX(0.28px) scaleX(0.8892);">25 m EUR</span>
<div style="position:absolute;left:1352px;top:879px;width:524px;height:1px;background:#e6e6e6;"></div>
<span class="t" style="left:1284px;top:875.38px;font-size:12.90px;color:#555;transform:translateX(0.28px) scaleX(0.8892);">20 m EUR</span>
<div style="position:absolute;left:1860.4px;top:773.8px;width:20px;height:20px;border-radius:50%;background:#05b96f"></div>
</body></html>
